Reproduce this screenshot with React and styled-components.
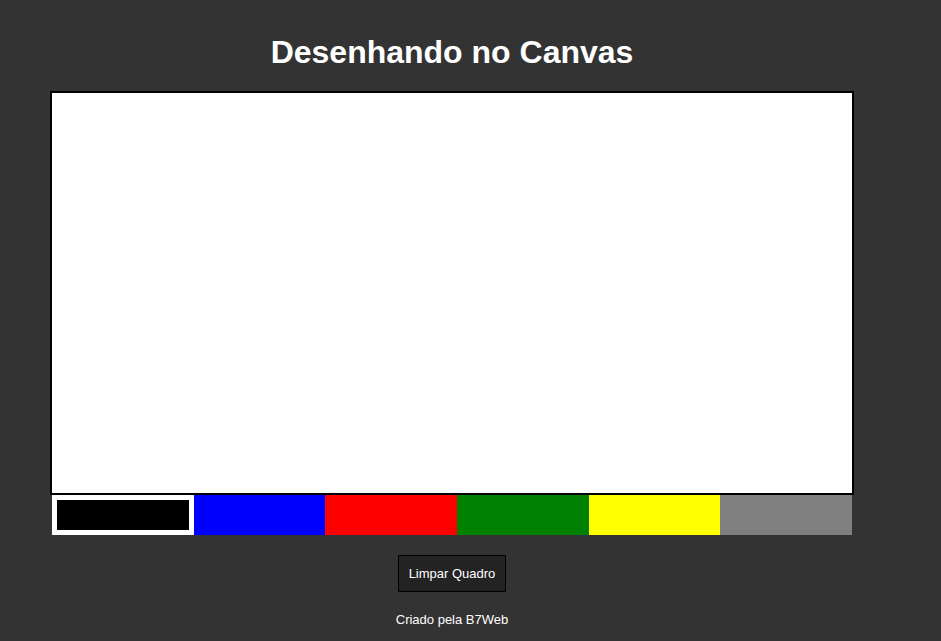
import React, { useState } from 'react';
import styled, { createGlobalStyle } from 'styled-components';

const GlobalStyle = createGlobalStyle`
  html, body {
    margin: 0;
    padding: 0;
    background-color: #333;
    font-family: "Liberation Sans", Arial, sans-serif;
    color: #fff;
  }
`;

const Page = styled.div`
  width: 904px;
  display: flex;
  flex-direction: column;
  align-items: center;
`;

const Title = styled.h1`
  margin: 34px 0 20px;
  font-size: 32px;
  line-height: 37px;
  font-weight: bold;
  color: #fff;
`;

const Board = styled.canvas`
  display: block;
  width: 800px;
  height: 400px;
  background-color: #fff;
  border: 2px solid #000;
`;

const Palette = styled.div`
  width: 800px;
  height: 40px;
  display: flex;
`;

const Swatch = styled.div`
  flex: 1;
  background-color: ${(p) => p.color};
  border: ${(p) => (p.active ? '5px solid #fff' : 'none')};
  cursor: pointer;
`;

const ClearButton = styled.button`
  margin-top: 20px;
  height: 37px;
  padding: 0 10px;
  background-color: #232323;
  border: 1px solid #000;
  color: #fff;
  font-family: "Liberation Sans", Arial, sans-serif;
  font-size: 13px;
  cursor: pointer;
`;

const Footer = styled.footer`
  margin-top: 20px;
  font-size: 13px;
  line-height: 15px;
`;

const colors = ['#000', '#00f', '#f00', '#008000', '#ff0', '#808080'];

export default function App() {
  const [current, setCurrent] = useState('#000');

  return (
    <>
      <GlobalStyle />
      <Page>
        <Title>Desenhando no Canvas</Title>
        <Board width={800} height={400} />
        <Palette>
          {colors.map((c) => (
            <Swatch
              key={c}
              color={c}
              active={c === current}
              onClick={() => setCurrent(c)}
            />
          ))}
        </Palette>
        <ClearButton>Limpar Quadro</ClearButton>
        <Footer>Criado pela B7Web</Footer>
      </Page>
    </>
  );
}
